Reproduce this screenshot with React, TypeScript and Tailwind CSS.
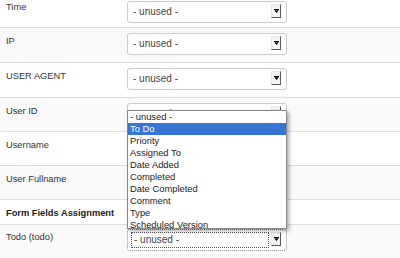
import React from "react";

const Arrow = () => (
  <div className="mr-[5px] mt-[2px] w-[10px] h-[14px] shrink-0 bg-[#f3f3f3] border border-t-[#e8e8e8] border-l-[#e8e8e8] border-r-[#5a5a5a] border-b-[#5a5a5a] flex items-center justify-center">
    <svg width="5" height="4" viewBox="0 0 5 4">
      <path d="M0 0H5V1H0Z M0.3 1.2H4.7L2.5 4Z" fill="#000" />
    </svg>
  </div>
);

const Select = ({ focused = false }: { focused?: boolean }) => (
  <div
    className={
      "w-[160px] h-[22px] rounded-[3px] bg-white flex items-start " +
      (focused ? "border border-dotted border-[#888]" : "border border-[#ccc]")
    }
  >
    {focused ? (
      <div className="flex-1 ml-[3px] mt-[2px] mr-[2px] h-[16px] border border-dotted border-[#555] pl-[2px] text-[10px] leading-[14px] text-[#444]">
        - unused -
      </div>
    ) : (
      <div className="flex-1 pl-[5px] text-[10px] leading-[19px] text-[#444]">- unused -</div>
    )}
    <Arrow />
  </div>
);

const items = [
  "- unused -",
  "To Do",
  "Priority",
  "Assigned To",
  "Date Added",
  "Completed",
  "Date Completed",
  "Comment",
  "Type",
  "Scheduled Version",
  "Tags",
];

const DropList = () => (
  <div className="absolute left-0 top-[7px] z-10 w-[160px] h-[119px] overflow-hidden bg-white border border-[#8a8a8a] shadow-[2px_2px_4px_rgba(0,0,0,0.35)]">
    {items.map((t, i) => (
      <div
        key={t}
        className={
          "h-[12px] leading-[12px] pl-[2px] text-[9.4px] whitespace-nowrap " +
          (i === 1 ? "bg-[#3875d7] text-white" : "text-[#222]")
        }
      >
        {t}
      </div>
    ))}
  </div>
);

const label = "w-[127px] pl-[6px] text-[9.3px] leading-[12px]";

export default function App() {
  return (
    <div
      className="w-[400px] h-[258px] overflow-hidden bg-white text-[#333]"
      style={{ fontFamily: '"Liberation Sans", Arial, sans-serif' }}
    >
      <div className="h-[27px] flex bg-white">
        <div className={label + " pt-[1px]"}>Time</div>
        <div className="pt-[1px]">
          <Select />
        </div>
      </div>
      <div className="h-[35px] flex bg-[#f9f9f9] border-t border-[#dddddd]">
        <div className={label + " pt-[7px]"}>IP</div>
        <div className="pt-[5px]">
          <Select />
        </div>
      </div>
      <div className="h-[35px] flex bg-white border-t border-[#dddddd]">
        <div className={label + " pt-[7px]"}>USER AGENT</div>
        <div className="pt-[5px]">
          <Select />
        </div>
      </div>
      <div className="h-[34px] flex bg-[#f9f9f9] border-t border-[#dddddd]">
        <div className={label + " pt-[7px]"}>User ID</div>
        <div className="pt-[5px]">
          <div className="relative">
            <Select />
            <DropList />
          </div>
        </div>
      </div>
      <div className="h-[34px] flex bg-white border-t border-[#dddddd]">
        <div className={label + " pt-[7px]"}>Username</div>
        <div className="pt-[5px]">
          <Select />
        </div>
      </div>
      <div className="h-[34px] flex bg-[#f9f9f9] border-t border-[#dddddd]">
        <div className={label + " pt-[7px]"}>User Fullname</div>
        <div className="pt-[5px]">
          <Select />
        </div>
      </div>
      <div className="h-[25px] flex bg-white border-t border-[#dddddd]">
        <div className="pl-[6px] pt-[7px] text-[9.3px] leading-[12px] font-bold text-[#222]">
          Form Fields Assignment
        </div>
      </div>
      <div className="h-[34px] flex bg-[#f9f9f9] border-t border-[#dddddd]">
        <div className={label + " pt-[6px]"}>Todo (todo)</div>
        <div className="pt-[4px]">
          <Select focused />
        </div>
      </div>
    </div>
  );
}
